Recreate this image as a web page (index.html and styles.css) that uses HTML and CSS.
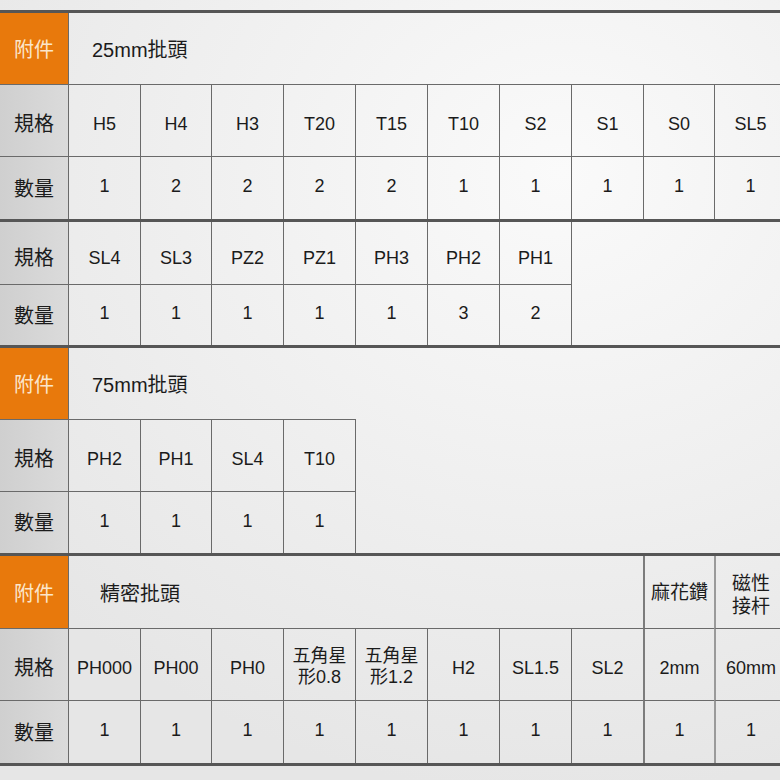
FILE: index.html
```html
<!DOCTYPE html>
<html lang="zh-Hant">
<head>
<meta charset="utf-8">
<title>附件規格</title>
<link rel="stylesheet" href="styles.css">
</head>
<body>
<div class="sheet">

  <div class="section s1">
    <div class="row">
      <div class="lab lab-accent first">附件</div>
      <div class="cell head span-all">25mm批頭</div>
    </div>
    <div class="row spec">
      <div class="lab">規格</div>
      <div class="cell">H5</div><div class="cell">H4</div><div class="cell">H3</div><div class="cell">T20</div><div class="cell">T15</div>
      <div class="cell">T10</div><div class="cell">S2</div><div class="cell">S1</div><div class="cell">S0</div><div class="cell">SL5</div>
    </div>
    <div class="row qty">
      <div class="lab">數量</div>
      <div class="cell">1</div><div class="cell">2</div><div class="cell">2</div><div class="cell">2</div><div class="cell">2</div>
      <div class="cell">1</div><div class="cell">1</div><div class="cell">1</div><div class="cell">1</div><div class="cell">1</div>
    </div>
  </div>

  <div class="section s1b">
    <div class="row spec top">
      <div class="lab first">規格</div>
      <div class="cell">SL4</div><div class="cell">SL3</div><div class="cell">PZ2</div><div class="cell">PZ1</div><div class="cell">PH3</div><div class="cell">PH2</div><div class="cell">PH1</div>
      <div class="cell empty e7"></div>
    </div>
    <div class="row qty">
      <div class="lab">數量</div>
      <div class="cell">1</div><div class="cell">1</div><div class="cell">1</div><div class="cell">1</div><div class="cell">1</div><div class="cell">3</div><div class="cell">2</div>
    </div>
  </div>

  <div class="section s2">
    <div class="row">
      <div class="lab lab-accent first">附件</div>
      <div class="cell head span-all">75mm批頭</div>
    </div>
    <div class="row spec">
      <div class="lab">規格</div>
      <div class="cell">PH2</div><div class="cell">PH1</div><div class="cell">SL4</div><div class="cell">T10</div>
      <div class="cell empty e4"></div>
    </div>
    <div class="row qty">
      <div class="lab">數量</div>
      <div class="cell">1</div><div class="cell">1</div><div class="cell">1</div><div class="cell">1</div>
    </div>
  </div>

  <div class="section s3">
    <div class="row">
      <div class="lab lab-accent first">附件</div>
      <div class="cell head head-wide span-8">精密批頭</div>
      <div class="cell sub sep">麻花鑽</div>
      <div class="cell sub sub-two sep2">磁性<br>接杆</div>
    </div>
    <div class="row spec">
      <div class="lab">規格</div>
      <div class="cell">PH000</div><div class="cell">PH00</div><div class="cell">PH0</div>
      <div class="cell two">五角星<br>形0.8</div><div class="cell two">五角星<br>形1.2</div>
      <div class="cell">H2</div><div class="cell">SL1.5</div><div class="cell">SL2</div>
      <div class="cell sep">2mm</div><div class="cell sep2">60mm</div>
    </div>
    <div class="row qty">
      <div class="lab">數量</div>
      <div class="cell">1</div><div class="cell">1</div><div class="cell">1</div><div class="cell">1</div><div class="cell">1</div>
      <div class="cell">1</div><div class="cell">1</div><div class="cell">1</div><div class="cell sep">1</div><div class="cell sep2">1</div>
    </div>
  </div>

</div>
</body>
</html>
```

FILE: styles.css
```css
* { box-sizing: border-box; }

html, body {
  margin: 0;
  padding: 0;
  width: 780px;
  height: 780px;
  overflow: hidden;
}

body {
  background: radial-gradient(ellipse 90% 80% at 72% 22%, #fafafa 0%, #f1f1f1 45%, #e6e6e6 100%);
  font-family: "Liberation Sans", "Noto Sans CJK TC", sans-serif;
  color: #1b1b1b;
}

.sheet {
  padding-top: 10px;
  width: 786px;
}

.section {
  display: grid;
  grid-template-columns: 68px 72px 71px 72px 72px 72px 72px 72px 72px 71px 72px;
  border-top: 3px solid #565656;
}

.row { display: contents; }

.s1 { grid-template-rows: 71px 72px 63px; }
.s1b { grid-template-rows: 62px 61px; }
.s2 { grid-template-rows: 71px 72px 62px; }
.s3 { grid-template-rows: 72px 72px 63px; border-bottom: 3px solid #565656; }

.lab {
  grid-column: 1;
  display: flex;
  align-items: center;
  justify-content: center;
  font-size: 20px;
  background: linear-gradient(to right, #cfcfcf, #dbdbdb);
  border-top: 1px solid #6a6a6a;
}

.lab.first { border-top: 0; }

.lab-accent {
  background: #e8790c;
  color: #fbe6cb;
}

.cell {
  display: flex;
  align-items: center;
  justify-content: center;
  text-align: center;
  font-size: 18px;
  border-left: 1px solid #6a6a6a;
  border-top: 1px solid #6a6a6a;
}

.spec > .cell { padding-top: 7px; }
.spec > .lab { padding-top: 4px; }
.top > .cell { padding-top: 10px; }
.top > .lab { padding-top: 6px; }
.qty > .cell { padding-bottom: 3px; }
.qty > .lab { padding-bottom: 2px; }

.top > .cell,
.head,
.sub,
.empty {
  border-top: 0;
}

.head {
  justify-content: flex-start;
  padding-left: 23px;
  font-size: 20px;
}

.head-wide { padding-left: 31px; }

.span-all { grid-column: 2 / -1; }
.span-8 { grid-column: 2 / 10; }

.sub {
  font-size: 19px;
  line-height: 23px;
}

.sub-two { padding-top: 5px; }

.spec > .two {
  font-size: 18px;
  line-height: 21px;
  padding-top: 5px;
}

.sep { border-left: 2px solid #7c7c7c; }
.sep2 { border-left: 2px solid #9a9a9a; }

.spec > .empty { padding: 0; }
.e7 { grid-column: 9 / -1; grid-row: 1 / span 2; }
.e4 { grid-column: 6 / -1; grid-row: 2 / span 2; }
```
